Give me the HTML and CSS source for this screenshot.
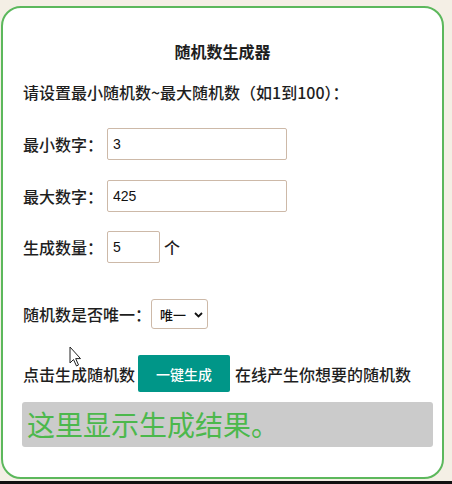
FILE: index.html
```html
<!DOCTYPE html>
<html lang="zh-CN">
<head>
<meta charset="utf-8">
<title>随机数生成器</title>
<link rel="stylesheet" href="styles.css">
</head>
<body>
<div class="card">
  <h1 class="title">随机数生成器</h1>
  <p class="intro">请设置最小随机数~最大随机数（如1到100）：</p>
  <div class="row row-1">
    <label class="label">最小数字：</label>
    <input class="field field-wide" type="text" value="3">
  </div>
  <div class="row row-2">
    <label class="label">最大数字：</label>
    <input class="field field-wide" type="text" value="425">
  </div>
  <div class="row row-3">
    <label class="label">生成数量：</label>
    <input class="field field-short" type="text" value="5">
    <span class="unit">个</span>
  </div>
  <div class="row row-4">
    <label class="label">随机数是否唯一：</label>
    <div class="select-wrap">
      <select class="select">
        <option>唯一</option>
        <option>不唯一</option>
      </select>
      <svg class="chevron" width="9" height="6" viewBox="0 0 9 6"><path d="M1 1 L4.5 4.5 L8 1" fill="none" stroke="#111" stroke-width="1.8"/></svg>
    </div>
  </div>
  <div class="row row-5">
    <span class="label">点击生成随机数</span>
    <button class="btn">一键生成</button>
    <span class="after">在线产生你想要的随机数</span>
  </div>
  <div class="result">这里显示生成结果。</div>
</div>
<svg class="cursor" width="14" height="22" viewBox="0 0 14 22"><path d="M1 1 L1 17 L4.5 13.5 L7.5 20 L9.5 19 L6.7 12.6 L11.5 12.6 Z" fill="#fff" stroke="#222" stroke-width="1" stroke-linejoin="round"/></svg>
<div class="bottom-strip"></div>
</body>
</html>
```

FILE: styles.css
```css
html, body {
  margin: 0;
  padding: 0;
}
body {
  background: #f4efe5;
  width: 452px;
  height: 484px;
  position: relative;
  overflow: hidden;
  font-family: "Noto Sans CJK SC", "Noto Sans", sans-serif;
  font-weight: 500;
  color: #1e1e1e;
}
.card {
  box-sizing: border-box;
  margin: 6px 0 0 1px;
  width: 443px;
  height: 473px;
  border: 2px solid #5cb85c;
  border-radius: 20px;
  background: #fff;
  padding: 33px 9px 0 20px;
}
.title {
  margin: 0;
  font-size: 16px;
  font-weight: bold;
  line-height: 20px;
  text-align: center;
  padding-right: 11px;
}
.intro {
  margin: 21px 0 0;
  font-size: 16px;
  line-height: 20px;
}
.row {
  display: flex;
  align-items: center;
  font-size: 16px;
  line-height: 20px;
}
.row-1 { margin-top: 26px; height: 32px; }
.row-2 { margin-top: 20px; height: 32px; }
.row-3 { margin-top: 19px; height: 32px; }
.row-4 { margin-top: 36px; height: 30px; }
.row-5 { margin-top: 26px; height: 37px; }
.label {
  white-space: nowrap;
}
.field {
  box-sizing: border-box;
  height: 32px;
  margin-left: 4px;
  border: 1px solid #cdb9a8;
  border-radius: 2px;
  padding: 0 5px;
  font-family: "Liberation Sans", Arial, sans-serif;
  font-size: 14px;
  color: #111;
  background: #fff;
  outline: none;
}
.field-wide { width: 180px; }
.field-short { width: 53px; }
.unit {
  margin-left: 4px;
}
.select-wrap {
  position: relative;
  margin-left: 0;
  height: 30px;
}
.select {
  box-sizing: border-box;
  width: 57px;
  height: 30px;
  -webkit-appearance: none;
  appearance: none;
  border: 1px solid #cdb9a8;
  border-radius: 3px;
  background: #fff;
  padding: 0 0 0 8px;
  font-family: "Noto Sans CJK SC", sans-serif;
  font-weight: 500;
  font-size: 13px;
  color: #111;
  outline: none;
}
.chevron {
  position: absolute;
  left: 43px;
  top: 13px;
  pointer-events: none;
}
.btn {
  box-sizing: border-box;
  margin-left: 3px;
  width: 92px;
  height: 37px;
  border: none;
  border-radius: 2px;
  background: #009688;
  color: #fff;
  font-family: "Noto Sans CJK SC", sans-serif;
  font-weight: 500;
  font-size: 14px;
  padding: 0;
}
.after {
  margin-left: 5px;
  white-space: nowrap;
}
.result {
  box-sizing: border-box;
  margin: 10px 0 0 -1px;
  width: 411px;
  height: 45px;
  background: #cbcbcb;
  border-radius: 3px;
  padding-left: 5px;
  color: #4cb84c;
  font-weight: 400;
  font-size: 28px;
  line-height: 45px;
}
.cursor {
  position: absolute;
  left: 69px;
  top: 346px;
}
.bottom-strip {
  position: absolute;
  left: 0;
  bottom: 0;
  width: 452px;
  height: 3px;
  background: #111;
}
```
